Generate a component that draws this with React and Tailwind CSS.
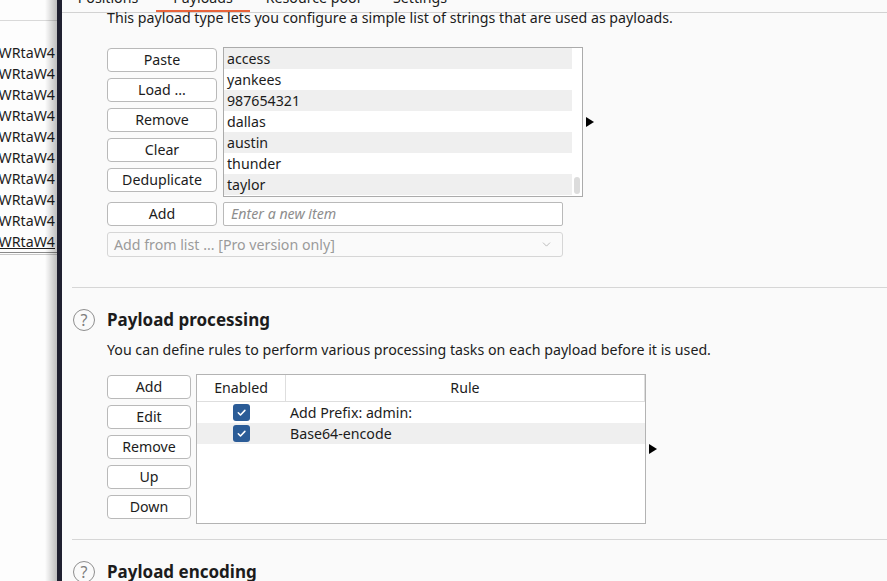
import React from "react";
import { ChevronDown } from "lucide-react";

const payloads = ["access", "yankees", "987654321", "dallas", "austin", "thunder", "taylor"];
const listButtons = ["Paste", "Load ...", "Remove", "Clear", "Deduplicate"];
const ruleButtons = ["Add", "Edit", "Remove", "Up", "Down"];
const rules = ["Add Prefix: admin:", "Base64-encode"];

const btn =
  "h-[24px] flex items-center justify-center rounded-[4px] border border-[#b9b9b9] bg-white text-[14.2px] leading-none text-[#1c1c1c]";

function Arrow() {
  return <div className="h-0 w-0 border-y-[5px] border-l-[8px] border-y-transparent border-l-black" />;
}

function Help() {
  return (
    <span className="flex h-[22px] w-[22px] items-center justify-center rounded-full border-[1.5px] border-[#8e8e8e] text-[16px] leading-none text-[#7d7d7d]">
      ?
    </span>
  );
}

function Check() {
  return (
    <span className="flex h-[17px] w-[17px] items-center justify-center rounded-[3px] bg-[#2b5c97]">
      <svg width="11" height="11" viewBox="0 0 12 12" fill="none">
        <path d="M2.5 6.3l2.4 2.4 4.8-5" stroke="white" strokeWidth="1.7" strokeLinecap="round" strokeLinejoin="round" />
      </svg>
    </span>
  );
}

export default function App() {
  return (
    <div className="flex h-[581px] w-[887px] overflow-hidden font-['Noto_Sans',sans-serif] text-[14.2px] text-[#1c1c1c]">
      {/* left list, mostly hidden */}
      <aside className="relative w-[57px] shrink-0 overflow-hidden bg-[#fdfdfd]">
        <div className="h-[21px] border-b border-[#d9d9d9]" />
        <div className="pt-[21px]">
          {Array.from({ length: 10 }).map((_, i) => (
            <div
              key={i}
              className={`flex h-[21px] justify-end whitespace-nowrap pr-[2px] leading-[21px] ${i === 9 ? "underline" : ""}`}
            >
              WRtaW4
            </div>
          ))}
          <div className="h-px bg-[#8a8a8a]" />
          <div className="mt-px h-px bg-[#c8c8c8]" />
        </div>
        <div className="absolute inset-y-0 right-0 w-[12px] bg-gradient-to-r from-transparent to-black/25" />
      </aside>
      <div className="w-[5px] shrink-0 bg-[#1f2030]" />

      <main className="flex-1 overflow-hidden bg-[#fafafa]">
        {/* tab strip, scrolled mostly out of view */}
        <div className="h-[13px] overflow-hidden border-b border-[#d2d2d2]">
          <div className="-ml-[2px] -mt-[12px] flex">
            <div className="h-[24px] w-[96px] text-center leading-[20px]">Positions</div>
            <div className="h-[24px] w-[94px] border-b-2 border-[#e8643c] text-center leading-[20px]">Payloads</div>
            <div className="h-[24px] w-[126px] text-center leading-[20px]">Resource pool</div>
            <div className="h-[24px] w-[88px] text-center leading-[20px]">Settings</div>
          </div>
        </div>

        <div className="pl-[10px]">
          <div className="pl-[35px]">
            <p className="-mt-[5px] h-[20px] leading-[20px]">
              This payload type lets you configure a simple list of strings that are used as payloads.
            </p>

            <div className="mt-[19px] flex items-center">
              <div className="flex w-[110px] flex-col gap-[6px] self-start pt-px">
                {listButtons.map((b) => (
                  <button key={b} type="button" className={btn}>
                    {b}
                  </button>
                ))}
              </div>
              <div className="ml-[6px] flex h-[150px] w-[360px] border border-[#ababab] bg-white">
                <div className="flex-1">
                  {payloads.map((p, i) => (
                    <div key={p} className={`h-[21px] pl-[3px] leading-[21px] ${i % 2 === 0 ? "bg-[#efefef]" : ""}`}>
                      {p}
                    </div>
                  ))}
                </div>
                <div className="flex w-[10px] flex-col justify-end pb-[2px] pl-[2px] pr-[2px]">
                  <div className="h-[17px] rounded-full bg-[#dcdcdc]" />
                </div>
              </div>
              <div className="ml-[3px]">
                <Arrow />
              </div>
            </div>

            <div className="mt-[5px] flex gap-[6px]">
              <button type="button" className={`${btn} w-[110px]`}>
                Add
              </button>
              <div className="flex h-[24px] w-[340px] items-center rounded-[2px] border border-[#b9b9b9] bg-white pl-[7px] italic text-[#8d8d8d]">
                Enter a new item
              </div>
            </div>

            <div className="mt-[6px] flex h-[25px] w-[456px] items-center justify-between rounded-[3px] border border-[#d6d6d6] pl-[6px] pr-[9px] text-[#9b9b9b]">
              <span>Add from list ... [Pro version only]</span>
              <ChevronDown size={13} strokeWidth={1.2} />
            </div>
          </div>

          <div className="mt-[30px] h-px bg-[#d6d6d6]" />

          <div className="mt-[20px] flex h-[24px] items-center gap-[12px] pl-px">
            <Help />
            <h2 className="text-[17px] font-bold">Payload processing</h2>
          </div>

          <div className="pl-[35px]">
            <p className="mt-[8px] h-[20px] leading-[20px]">
              You can define rules to perform various processing tasks on each payload before it is used.
            </p>

            <div className="mt-[14px] flex items-center">
              <div className="flex w-[84px] flex-col gap-[6px] self-start pt-px">
                {ruleButtons.map((b) => (
                  <button key={b} type="button" className={btn}>
                    {b}
                  </button>
                ))}
              </div>
              <div className="ml-[5px] h-[150px] w-[450px] border border-[#b3b3b3] bg-white">
                <div className="flex h-[27px] border-b border-[#dedede]">
                  <div className="flex w-[89px] items-center justify-center border-r border-[#dedede]">Enabled</div>
                  <div className="flex flex-1 items-center justify-center border-r border-[#dedede]">Rule</div>
                </div>
                {rules.map((r, i) => (
                  <div key={r} className={`flex h-[21px] items-center ${i % 2 === 1 ? "bg-[#efefef]" : ""}`}>
                    <div className="flex w-[89px] justify-center">
                      <Check />
                    </div>
                    <div className="pl-[4px]">{r}</div>
                  </div>
                ))}
              </div>
              <div className="ml-[3px]">
                <Arrow />
              </div>
            </div>
          </div>

          <div className="mt-[15px] h-px bg-[#d6d6d6]" />

          <div className="mt-[20px] flex h-[24px] items-center gap-[12px] pl-px">
            <Help />
            <h2 className="text-[17px] font-bold">Payload encoding</h2>
          </div>
        </div>
      </main>
    </div>
  );
}
